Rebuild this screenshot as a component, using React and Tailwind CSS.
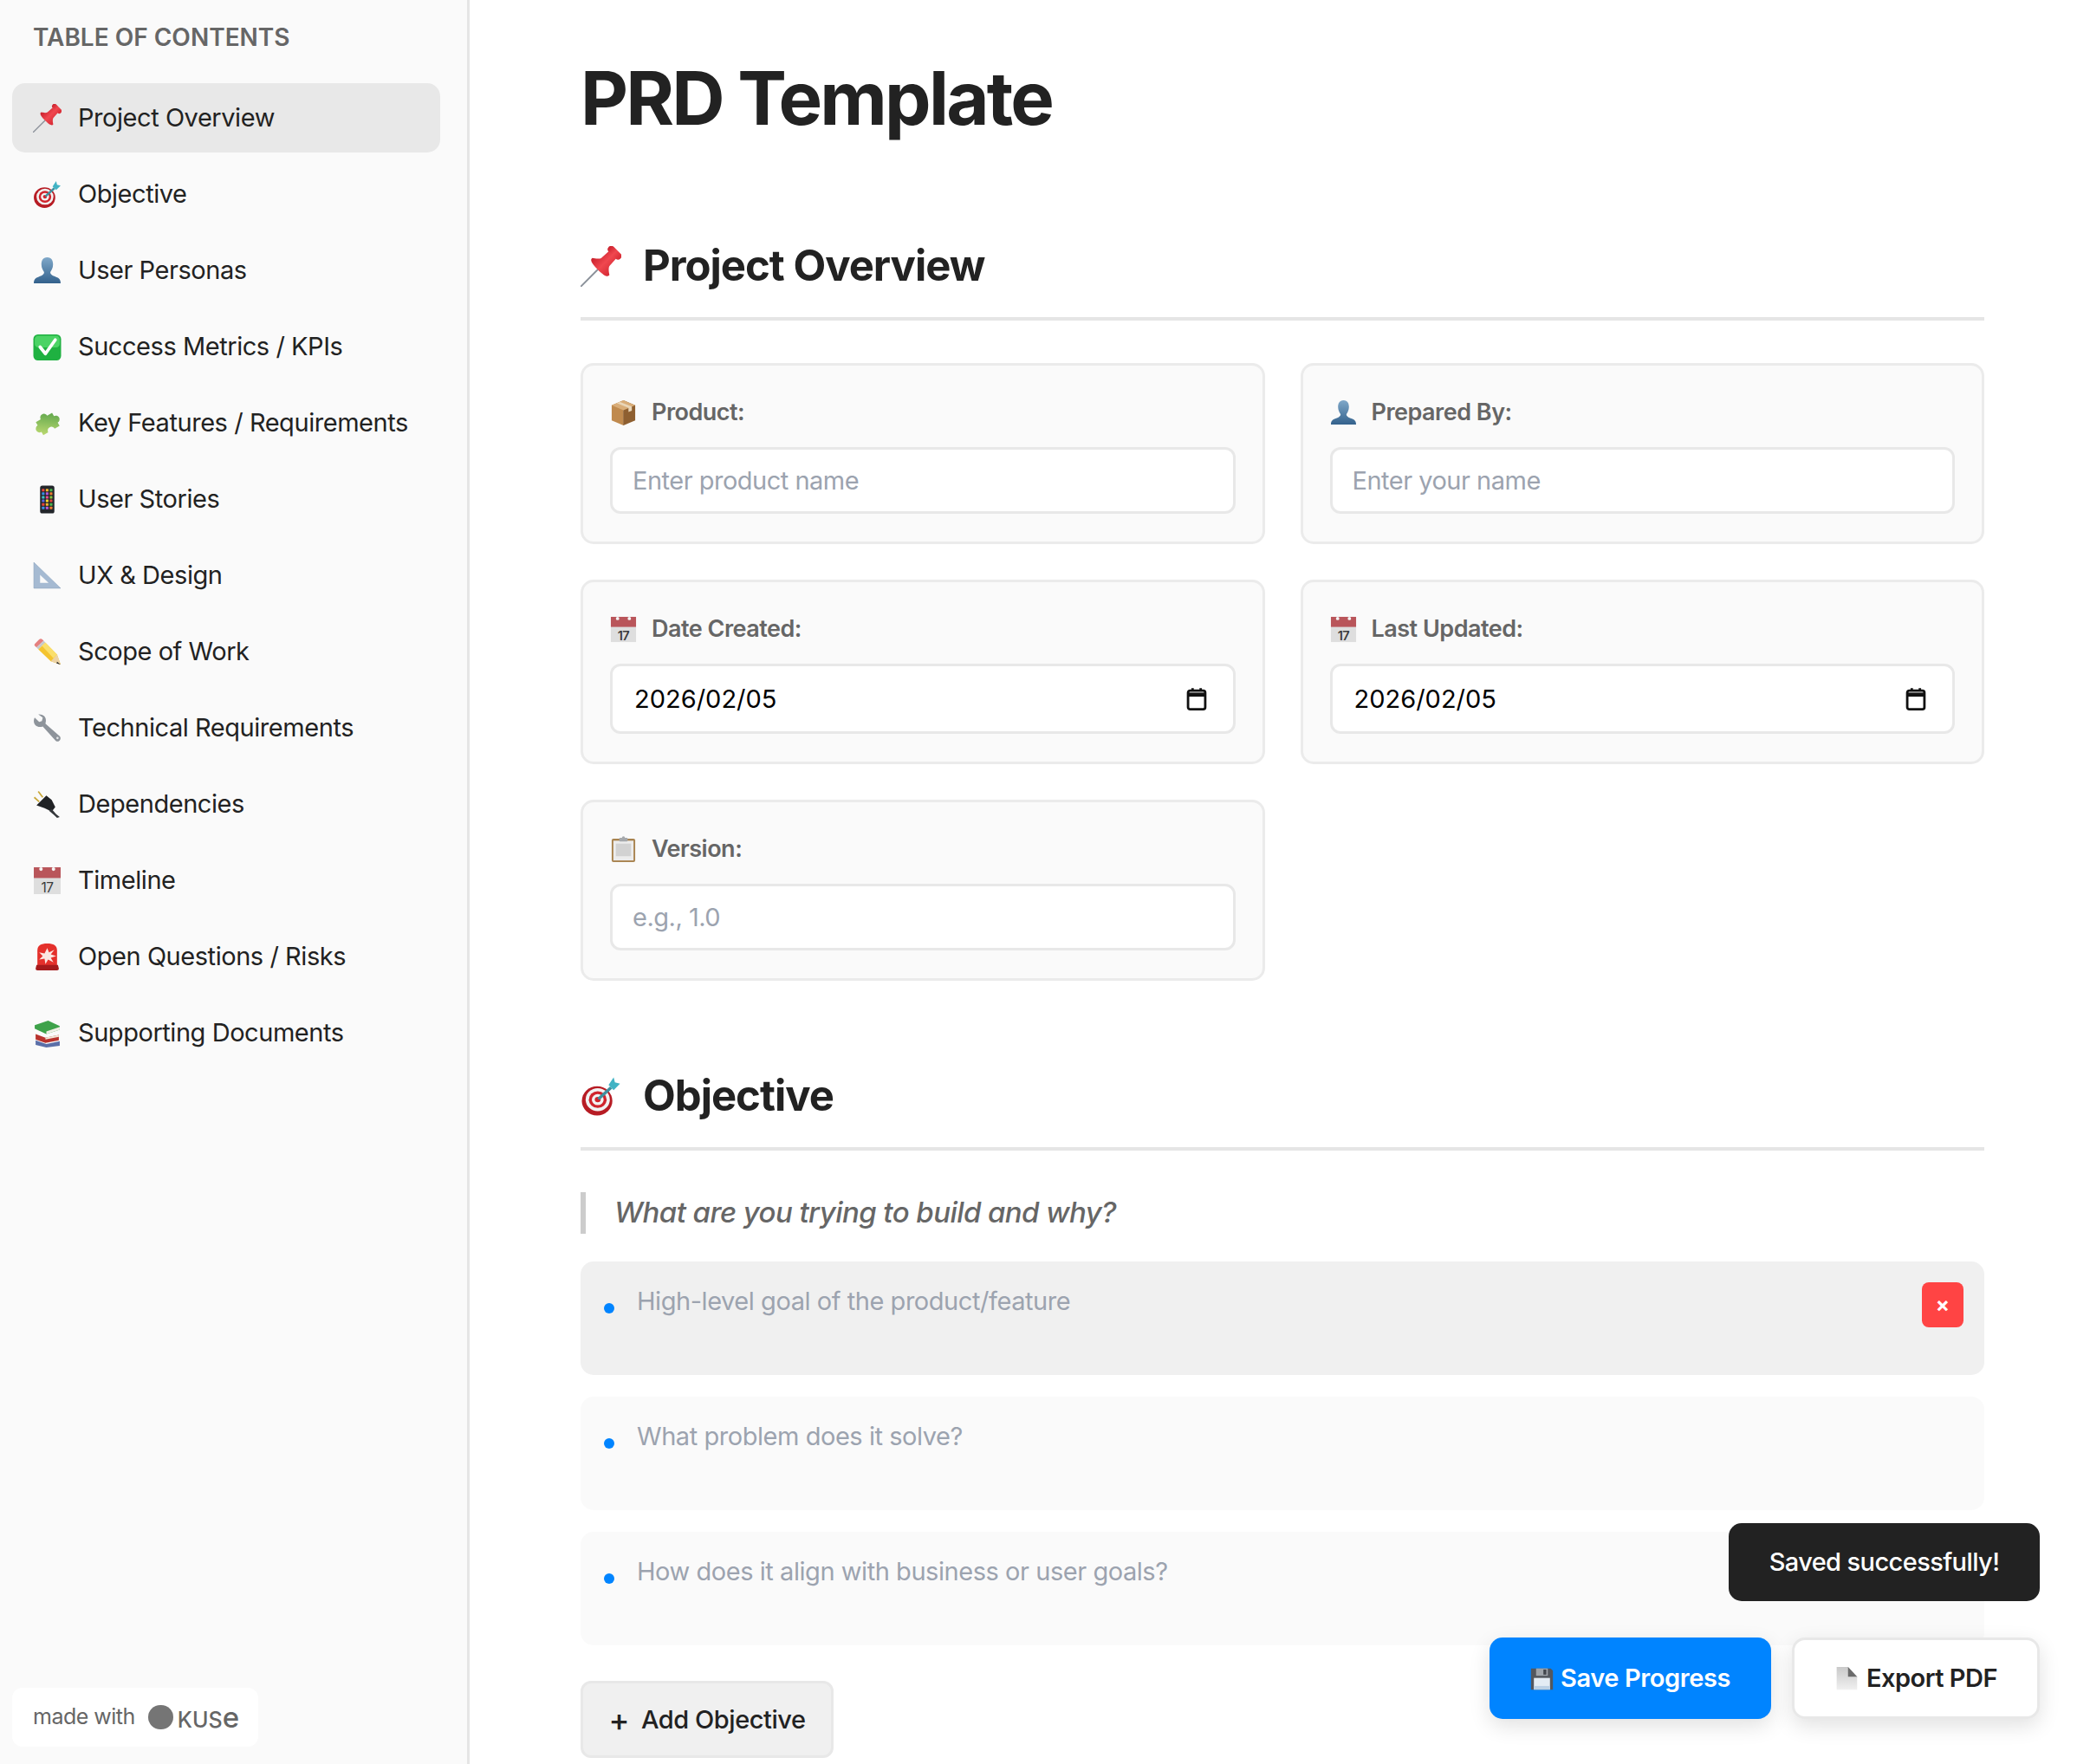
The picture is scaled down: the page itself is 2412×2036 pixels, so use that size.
import React from "react";

const PinIcon = ({ className }) => (
  <svg viewBox="0 0 32 32" className={className}>
    <defs>
      <linearGradient id="pinFill" x1="0" y1="0" x2="1" y2="0">
        <stop offset="0" stopColor="#c9202c" />
        <stop offset="0.5" stopColor="#f0474f" />
        <stop offset="1" stopColor="#d62a34" />
      </linearGradient>
    </defs>
    <g transform="rotate(45 16 16)">
      <path d="M16 17 V38" stroke="#8a9099" strokeWidth="1.300" strokeLinecap="round" />
      <rect x="9.500" y="-2" width="13" height="5.500" rx="2.700" fill="url(#pinFill)" />
      <path d="M12 3 H20 L20.500 11 C21 13 24 15 25.500 16 C26 18 24 19.500 16 19.500 C8 19.500 6 18 6.500 16 C8 15 11 13 11.500 11 Z" fill="url(#pinFill)" />
    </g>
  </svg>
);

const TargetIcon = ({ className }) => (
  <svg viewBox="0 0 32 32" className={className}>
    <ellipse cx="13" cy="19.500" rx="12" ry="11.500" fill="#b71c24" />
    <ellipse cx="13.500" cy="18.500" rx="9.500" ry="9" fill="#f2f2f2" />
    <ellipse cx="13.500" cy="18.500" rx="7" ry="6.600" fill="#d0242c" />
    <ellipse cx="13.500" cy="18.500" rx="4.600" ry="4.300" fill="#f2f2f2" />
    <ellipse cx="13.500" cy="18.500" rx="2.300" ry="2.100" fill="#d0242c" />
    <path d="M14 18 L24 9" stroke="#3f8f9e" strokeWidth="2.400" />
    <path d="M22 7 L26 1 L27 5 L31 6 L26 11 Z" fill="#41b3c4" />
  </svg>
);

const BustIcon = ({ className }) => (
  <svg viewBox="0 0 32 32" className={className}>
    <defs>
      <linearGradient id="bustFill" x1="0" y1="0" x2="0" y2="1">
        <stop offset="0" stopColor="#7fa8c9" />
        <stop offset="1" stopColor="#33618c" />
      </linearGradient>
    </defs>
    <path d="M16 1 C11 1 9.500 5 9.500 9 C9.500 13 11.500 16 12.500 17.500 C12.800 20 10 21.500 6 23 C2.500 24.300 1 26 1 30 H31 C31 26 29.500 24.300 26 23 C22 21.500 19.200 20 19.500 17.500 C20.500 16 22.500 13 22.500 9 C22.500 5 21 1 16 1 Z" fill="url(#bustFill)" />
  </svg>
);

const CheckIcon = ({ className }) => (
  <svg viewBox="0 0 32 32" className={className}>
    <rect x="0.500" y="2" width="31" height="29" rx="5" fill="#1fb141" />
    <rect x="2" y="3.500" width="28" height="13" rx="4" fill="#4bd365" />
    <path d="M8 16 L14 23.500 L25 8" fill="none" stroke="#fff" strokeWidth="3.600" strokeLinecap="round" strokeLinejoin="round" />
  </svg>
);

const PuzzleIcon = ({ className }) => (
  <svg viewBox="0 0 32 32" className={className}>
    <defs>
      <linearGradient id="puzzleFill" x1="0" y1="1" x2="1" y2="0">
        <stop offset="0" stopColor="#c4de74" />
        <stop offset="1" stopColor="#4d9c45" />
      </linearGradient>
    </defs>
    <g transform="translate(16 16) rotate(-30) scale(1.050) translate(-16 -17)">
      <path d="M6 10 H12 A4 4 0 1 1 20 10 H26 V14 A4 4 0 1 1 26 22 V26 H20 A4 4 0 1 0 12 26 H6 V22 A4 4 0 1 1 6 14 Z" fill="url(#puzzleFill)" />
    </g>
  </svg>
);

const PhoneIcon = ({ className }) => {
  const colors = ["#e6453c", "#f5b62e", "#4bb84f", "#3a8fe6", "#b557d8", "#f07c2e", "#3cc3c9", "#e64d8f", "#89c33c", "#5865e0", "#f5d72e", "#e6453c"];
  return (
    <svg viewBox="0 0 32 32" className={className}>
      <rect x="8" y="0.500" width="16" height="31" rx="2.500" fill="#23262b" />
      {[0, 1, 2, 3, 4, 5].map((row) =>
        [0, 1, 2].map((col) => (
          <rect key={`${row}-${col}`} x={10 + col * 4.400} y={4 + row * 4} width="3" height="3" rx="0.500" fill={colors[(row * 3 + col) % colors.length]} />
        ))
      )}
    </svg>
  );
};

const RulerIcon = ({ className }) => (
  <svg viewBox="0 0 32 32" className={className}>
    <path fillRule="evenodd" d="M1 1 L31 30 H1 Z M8 15 V24 H17.500 Z" fill="#a5bad2" />
    <path d="M1 1 L31 30 H1 Z" fill="none" stroke="#8fa7c2" strokeWidth="0.600" />
  </svg>
);

const PencilIcon = ({ className }) => (
  <svg viewBox="0 0 32 32" className={className}>
    <path d="M2 7 L7 2 C8 1 9.500 1 10.500 2 L12 3.500 L4 11 L2.500 9.500 C1.500 9 1.500 8 2 7 Z" fill="#e5807f" />
    <path d="M4 11 L12 3.500 L14 5.500 L6 13 Z" fill="#c7c9cc" />
    <path d="M6 13 L14 5.500 L27 19 L31 30 L20 26.500 Z" fill="#f4c430" />
    <path d="M10 9 L14 5.500 L27 19 L23 23 Z" fill="#fadf6b" />
    <path d="M20 26.500 L27 19 L31 30 Z" fill="#ecd3a6" />
    <path d="M27 27 L31 30 L26.500 28.800 Z" fill="#2b2b2b" />
  </svg>
);

const WrenchIcon = ({ className }) => (
  <svg viewBox="0 0 32 32" className={className}>
    <path d="M2 4 L7 9 L10 8 L11 4 L6 0.500 C11 0 15 3 14.500 8 L14 11 L30 25 C31.500 26.500 31 29 29.500 30 C28 31.500 26 31 25 29.500 L11 14 C6 16 1 13 1 8 C1 6.500 1.500 5 2 4 Z" fill="#8e949b" />
    <circle cx="27.500" cy="27" r="1.300" fill="#e4e6e8" />
  </svg>
);

const PlugIcon = ({ className }) => (
  <svg viewBox="0 0 32 32" className={className}>
    <path d="M11 8 L6 1.500 M7 13 L1.500 8" stroke="#c9a83a" strokeWidth="1.700" />
    <path d="M4 17 L15 6 L21 11 L25 19 L21 24 L13 20 Z" fill="#202225" />
    <path d="M21 21 L26 27 L30 30 L27 31 L24 28 L18 23 Z" fill="#34373b" />
  </svg>
);

const CalendarIcon = ({ className }) => (
  <svg viewBox="0 0 32 32" className={className}>
    <rect x="1" y="1" width="30" height="30" fill="#dedede" />
    <rect x="1" y="1" width="30" height="12" fill="#b9555a" />
    <circle cx="9" cy="3" r="2" fill="#f5f5f5" />
    <circle cx="23" cy="3" r="2" fill="#f5f5f5" />
    <text x="16" y="29" textAnchor="middle" fontSize="15" fontFamily="Inter, sans-serif" fill="#3b3b3b">17</text>
  </svg>
);

const SirenIcon = ({ className }) => (
  <svg viewBox="0 0 32 32" className={className}>
    <path d="M5 26 V9 C5 3 9 1 16 1 C23 1 27 3 27 9 V26 Z" fill="#e4302b" />
    <path d="M16 6 L18 11 L24 8 L20 13 L26 15 L20 17 L23 22 L17 19 L14 24 L13 18 L7 19 L11 15 L7 11 L13 12 Z" fill="#fbe7e2" />
    <path d="M4 25 H28 L29 29 C29 31 27 31 26 31 H6 C5 31 3 31 3 29 Z" fill="#a51a1c" />
  </svg>
);

const BooksIcon = ({ className }) => (
  <svg viewBox="0 0 32 32" className={className}>
    <path d="M3 24 L15 28 L30 25 V30 L15 32 L3 29 Z" fill="#5b6fa8" />
    <path d="M3 17 L14 21 L29 18 V24 L14 27 L3 23 Z" fill="#b8322d" />
    <path d="M14 21 L29 18 V20 L14 23 Z" fill="#f0e7d8" />
    <path d="M2 7 L17 2 L30 8 V12 L15 17 L2 11 Z" fill="#3ea24a" />
    <path d="M15 14 L30 9 V12 L15 17 Z" fill="#f0efe6" />
  </svg>
);

const BoxIcon = ({ className }) => (
  <svg viewBox="0 0 32 32" className={className}>
    <path d="M16 1 L30 7 V25 L16 31 Z" fill="#8e5f30" />
    <path d="M16 1 L2 7 V25 L16 31 Z" fill="#c08a4e" />
    <path d="M2 7 L16 1 L30 7 L16 13 Z" fill="#d9ad78" />
    <path d="M8 4.500 L22 10 V15 L26 13.500 V8.500 L12 3 Z" fill="#e9d6b8" />
    <path d="M16 13 V31" stroke="#7a4f26" strokeWidth="0.500" />
  </svg>
);

const ClipboardIcon = ({ className }) => (
  <svg viewBox="0 0 32 32" className={className}>
    <rect x="2" y="3" width="28" height="28" rx="2" fill="#a8834f" />
    <rect x="4" y="5.500" width="24" height="23.500" fill="#ececec" />
    <rect x="7" y="9" width="18" height="15" fill="#d2d2d2" />
    <rect x="11" y="2" width="10" height="4.500" rx="1" fill="#a5a8ac" />
    <circle cx="16" cy="2" r="1.800" fill="#a5a8ac" />
  </svg>
);

const FloppyIcon = ({ className }) => (
  <svg viewBox="0 0 32 32" className={className}>
    <path d="M1 2 H28 L31 5 V31 H1 Z" fill="#53575e" />
    <rect x="8" y="2" width="16" height="10" fill="#9fa4aa" />
    <rect x="18" y="3.500" width="4" height="7" fill="#42464c" />
    <rect x="5" y="15" width="22" height="16" fill="#e4ecf4" />
    <rect x="5" y="26" width="22" height="5" fill="#bcd0e4" />
  </svg>
);

const PageIcon = ({ className }) => (
  <svg viewBox="0 0 32 32" className={className}>
    <defs>
      <linearGradient id="pageFill" x1="0" y1="0" x2="0" y2="1">
        <stop offset="0" stopColor="#c9c9c9" />
        <stop offset="1" stopColor="#f0f0f0" />
      </linearGradient>
    </defs>
    <path d="M3 1 H18 L30 14 V31 H3 Z" fill="url(#pageFill)" />
    <path d="M18 1 L30 14 H18 Z" fill="#6b6b6b" />
  </svg>
);

const DateIcon = () => (
  <svg viewBox="0 0 24 24" className="w-[28px] h-[28px] shrink-0" fill="none" stroke="#111" strokeWidth="2.400">
    <rect x="3.500" y="3.500" width="17" height="18.500" rx="2" />
    <path d="M3.500 7.500 H20.500" strokeWidth="4" />
    <path d="M8 1 V4 M16 1 V4" />
  </svg>
);

const tocItems = [
  [PinIcon, "Project Overview"],
  [TargetIcon, "Objective"],
  [BustIcon, "User Personas"],
  [CheckIcon, "Success Metrics / KPIs"],
  [PuzzleIcon, "Key Features / Requirements"],
  [PhoneIcon, "User Stories"],
  [RulerIcon, "UX & Design"],
  [PencilIcon, "Scope of Work"],
  [WrenchIcon, "Technical Requirements"],
  [PlugIcon, "Dependencies"],
  [CalendarIcon, "Timeline"],
  [SirenIcon, "Open Questions / Risks"],
  [BooksIcon, "Supporting Documents"],
];

const Sidebar = () => (
  <aside className="w-[542px] shrink-0 h-full flex flex-col bg-[#fafafa] border-r-[3px] border-[#e5e5e5] pl-[14px] pr-[31px]">
    <h2 className="pl-[24px] pt-[26px] h-[96px] text-[28px] leading-[34px] font-semibold text-[#666666]">
      TABLE OF CONTENTS
    </h2>
    <nav className="flex flex-col gap-[8px]">
      {tocItems.map(([Icon, label], i) => (
        <a
          key={label}
          className={`h-[80px] rounded-[15px] pl-[24px] flex items-center gap-[19px] text-[29px] tracking-[-0.45px] text-[#222222] ${i === 0 ? "bg-[#e8e8e8]" : ""}`}
        >
          <Icon className="w-[33px] h-[33px] shrink-0" />
          {label}
        </a>
      ))}
    </nav>
    <div className="mt-auto mb-[20px] w-[284px] h-[68px] rounded-[12px] bg-white pl-[24px] flex items-center text-[25px] tracking-[-0.5px] text-[#666666]">
      made with
      <span className="ml-[15px] w-[29px] h-[28px] rounded-full bg-[#757575]" />
      <span className="ml-[5px] text-[25px] leading-none font-medium tracking-[0]">
        KUS<span className="text-[33px]">e</span>
      </span>
    </div>
  </aside>
);

const SectionHeading = ({ icon: Icon, children }) => (
  <h2 className="flex items-center gap-[25px] h-[92px] border-b-[4px] border-[#e5e5e5] pb-[30px] text-[49px] leading-[60px] font-bold tracking-[-1px] text-[#222222]">
    <Icon className="w-[47px] h-[47px] shrink-0" />
    {children}
  </h2>
);

const Card = ({ icon: Icon, label, children }) => (
  <div className="rounded-[15px] border-[3px] border-[#ebebeb] bg-[#fafafa] px-[31px] pb-[32px]">
    <label className="flex items-center gap-[17px] h-[94px] pt-[14px] text-[27px] tracking-[-0.5px] font-semibold text-[#666666]">
      <Icon className="w-[31px] h-[31px] shrink-0" />
      {label}
    </label>
    {children}
  </div>
);

const TextField = ({ placeholder }) => (
  <input
    type="text"
    placeholder={placeholder}
    className="w-full h-[77px] rounded-[12px] border-[3px] border-[#e8e8e8] bg-white px-[23px] text-[29px] tracking-[-0.5px] outline-none placeholder:text-[#9ca3af]"
  />
);

const DateField = ({ value }) => (
  <div className="w-full h-[81px] rounded-[12px] border-[3px] border-[#e8e8e8] bg-white pl-[25px] pr-[28px] flex items-center">
    <input type="text" readOnly value={value} className="flex-1 min-w-0 text-[29px] text-black outline-none bg-transparent" />
    <DateIcon />
  </div>
);

const ObjectiveItem = ({ placeholder, active }) => (
  <div className={`h-[131px] rounded-[15px] pl-[27px] pr-[24px] pt-[26px] flex items-start ${active ? "bg-[#f0f0f0]" : "bg-[#fafafa]"}`}>
    <span className="w-[12px] h-[12px] mt-[22px] rounded-full bg-[#0084ff] shrink-0" />
    <textarea
      rows={1}
      placeholder={placeholder}
      className="flex-1 ml-[26px] mr-[11px] h-[40px] resize-none text-[29px] tracking-[-0.45px] leading-[40px] bg-transparent outline-none placeholder:text-[#9ca3af]"
    />
    {active && (
      <button className="w-[48px] h-[52px] -mt-[2px] rounded-[8px] bg-[#ff4444] text-white text-[24px] font-bold leading-none">×</button>
    )}
  </div>
);

const Main = () => (
  <main className="flex-1 h-full overflow-hidden pl-[128px] pr-[122px] pt-[58px]">
    <h1 className="text-[85px] leading-[112px] font-bold tracking-[-2.8px] text-[#222222]">PRD Template</h1>

    <section className="mt-[108px]">
      <SectionHeading icon={PinIcon}>Project Overview</SectionHeading>
      <div className="mt-[49px] grid grid-cols-2 gap-[41px]">
        <Card icon={BoxIcon} label="Product:">
          <TextField placeholder="Enter product name" />
        </Card>
        <Card icon={BustIcon} label="Prepared By:">
          <TextField placeholder="Enter your name" />
        </Card>
        <Card icon={CalendarIcon} label="Date Created:">
          <DateField value="2026/02/05" />
        </Card>
        <Card icon={CalendarIcon} label="Last Updated:">
          <DateField value="2026/02/05" />
        </Card>
        <Card icon={ClipboardIcon} label="Version:">
          <TextField placeholder="e.g., 1.0" />
        </Card>
      </div>
    </section>

    <section className="mt-[104px]">
      <SectionHeading icon={TargetIcon}>Objective</SectionHeading>
      <blockquote className="mt-[48px] h-[48px] border-l-[6px] border-[#cccccc] pl-[33px] flex items-center text-[33px] tracking-[-0.58px] font-medium italic text-[#666666]">
        What are you trying to build and why?
      </blockquote>
      <div className="mt-[32px] flex flex-col gap-[25px]">
        <ObjectiveItem active placeholder="High-level goal of the product/feature" />
        <ObjectiveItem placeholder="What problem does it solve?" />
        <ObjectiveItem placeholder="How does it align with business or user goals?" />
      </div>
      <button className="mt-[41px] w-[292px] h-[89px] rounded-[12px] border-[3px] border-[#e8e8e8] bg-[#f0f0f0] flex items-center justify-center gap-[14px] text-[29px] tracking-[-0.45px] font-medium text-[#222222]">
        <span className="text-[36px] leading-none">+</span>
        Add Objective
      </button>
    </section>
  </main>
);

export default function App() {
  return (
    <div className="relative flex h-screen overflow-hidden bg-white font-[Inter,sans-serif]">
      <Sidebar />
      <Main />
      <div className="absolute right-[58px] bottom-[188px] w-[359px] h-[90px] rounded-[15px] bg-[#222222] flex items-center justify-center text-[29px] tracking-[-0.6px] font-medium text-white">
        Saved successfully!
      </div>
      <div className="absolute right-[58px] bottom-[52px] flex gap-[24px]">
        <button className="w-[325px] h-[94px] rounded-[15px] bg-[#0084ff] flex items-center justify-center gap-[8px] text-[29px] tracking-[-0.4px] font-semibold text-white shadow-[0_8px_24px_rgba(0,0,0,0.12)]">
          <FloppyIcon className="w-[27px] h-[27px]" />
          Save Progress
        </button>
        <button className="w-[286px] h-[94px] rounded-[15px] border-[3px] border-[#e8e8e8] bg-white flex items-center justify-center gap-[9px] text-[29px] tracking-[-0.5px] font-semibold text-[#222222] shadow-[0_8px_24px_rgba(0,0,0,0.12)]">
          <PageIcon className="w-[28px] h-[30px]" />
          Export PDF
        </button>
      </div>
    </div>
  );
}
